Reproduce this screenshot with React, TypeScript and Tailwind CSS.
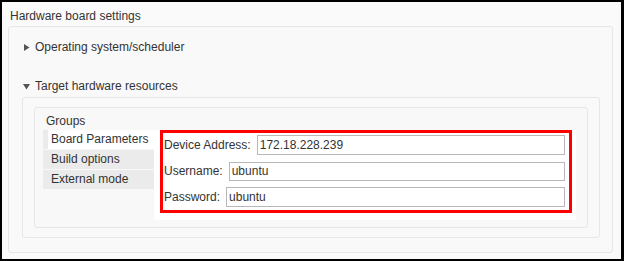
import React from "react";

const Tri = ({ down }: { down?: boolean }) => (
  <svg width="7" height="7" viewBox="0 0 7 7" className="shrink-0">
    {down ? <polygon points="0,1 7,1 3.5,6.5" fill="#555" /> : <polygon points="1,0 6.5,3.5 1,7" fill="#555" />}
  </svg>
);

export default function App() {
  return (
    <div
      className="w-[624px] h-[261px] box-border bg-[#fafafa] border-black border-l-2 border-t-2 border-r-[3px] border-b-2 flex flex-col text-[12px] text-[#333] whitespace-nowrap"
      style={{ fontFamily: '"Liberation Sans", Arial, sans-serif' }}
    >
      <div className="h-[24px] pl-[8px] pt-[7px] leading-[15px]">Hardware board settings</div>
      <div className="ml-[6px] w-[605px] h-[227px] box-border border border-[#e6e6e6] rounded-[3px] bg-[#f9f9f9] flex flex-col">
        <div className="h-[41px] pl-[14px] pt-[13px] flex items-start gap-[5px] leading-[15px]">
          <div className="pt-[4px]"><Tri /></div>
          <span>Operating system/scheduler</span>
        </div>
        <div className="h-[29px] pl-[14px] pt-[11px] flex items-start gap-[5px] leading-[15px]">
          <div className="pt-[4px]"><Tri down /></div>
          <span>Target hardware resources</span>
        </div>
        <div className="ml-[13px] w-[578px] h-[141px] box-border border border-[#e6e6e6] rounded-[3px] bg-[#f9f9f9] pt-[9px]">
          <div className="ml-[11px] w-[554px] h-[121px] box-border border border-[#e6e6e6] rounded-[3px] bg-[#f8f8f8] flex flex-col">
            <div className="h-[22px] pl-[11px] pt-[6px] leading-[15px]">Groups</div>
            <div className="flex ml-[8px]">
              <div className="w-[111px] flex flex-col">
                <div className="h-[19px] flex bg-[#ebebeb]">
                  <div className="w-[5px]" />
                  <div className="flex-1 bg-white pl-[3px] pt-[2px] leading-[15px]">Board Parameters</div>
                </div>
                <div className="h-[1px] bg-[#f8f8f8]" />
                <div className="h-[19px] bg-[#ebebeb] pl-[8px] pt-[2px] leading-[15px]">Build options</div>
                <div className="h-[1px] bg-[#f8f8f8]" />
                <div className="h-[19px] bg-[#ebebeb] pl-[8px] pt-[2px] leading-[15px]">External mode</div>
              </div>
              <div className="w-[422px] h-[90px] bg-white pl-[6px]">
                <div className="w-[412px] h-[83px] box-border border-[3px] border-[#ff0000] pl-[1px] pr-[4px] pt-[2px] flex flex-col gap-[6px]">
                  <div className="flex items-center h-[20px]">
                    <span className="leading-[15px] mr-[6px]">Device Address:</span>
                    <div className="flex-1 h-[20px] box-border border border-[#b8b8b8] bg-white pl-[2px] leading-[18px]">172.18.228.239</div>
                  </div>
                  <div className="flex items-center h-[19px] mt-[1px]">
                    <span className="leading-[15px] mr-[6px]">Username:</span>
                    <div className="flex-1 h-[19px] box-border border border-[#b8b8b8] bg-white pl-[2px] leading-[17px]">ubuntu</div>
                  </div>
                  <div className="flex items-center h-[20px]">
                    <span className="leading-[15px] mr-[6px]">Password:</span>
                    <div className="flex-1 h-[20px] box-border border border-[#b8b8b8] bg-white pl-[2px] leading-[18px]">ubuntu</div>
                  </div>
                </div>
              </div>
            </div>
          </div>
        </div>
      </div>
    </div>
  );
}
